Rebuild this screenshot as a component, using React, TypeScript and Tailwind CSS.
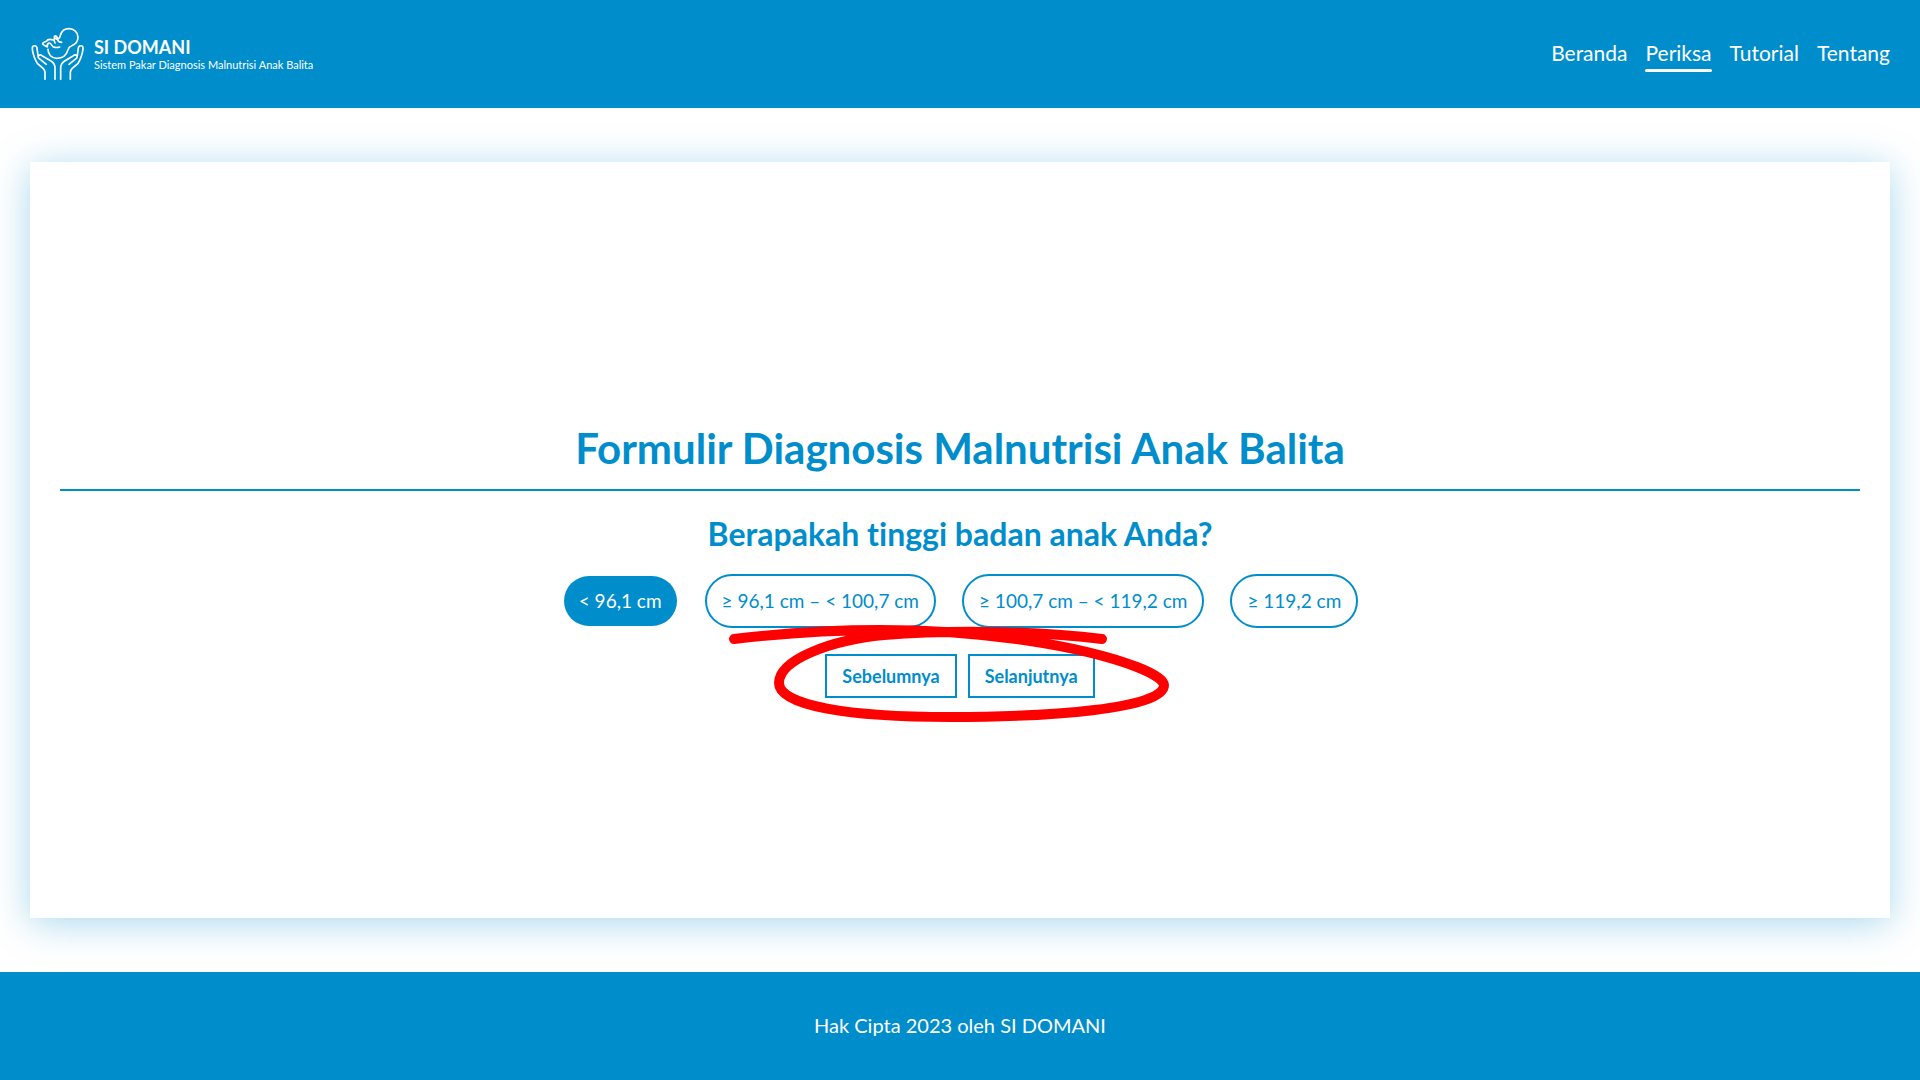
import { useState } from 'react';

const navLinks = ['Beranda', 'Periksa', 'Tutorial', 'Tentang'];
const heights = ['< 96,1 cm', '≥ 96,1 cm – < 100,7 cm', '≥ 100,7 cm – < 119,2 cm', '≥ 119,2 cm'];

function Logo() {
  return (
    <svg
      aria-hidden="true"
      className="h-[54px] w-[54px] shrink-0"
      viewBox="30 33 162 162"
      fill="none"
      stroke="currentColor"
      strokeWidth="5"
      strokeLinecap="round"
      strokeLinejoin="round"
    >
      <path d="M122 55C126 44 135 38 147 38c15 0 27 11 27 25 0 14-9 23-20 27-6 2-8 5-10 11-4 16-17 26-34 26-15 0-26-12-26-27" />
      <path d="M122 55c-1 8-4 12-8 14M112 70c-6-1-9-3-9-9 4-3 8 0 9 5M104 61c-3 7-2 14 1 20M112 70c2 7 7 9 13 9" />
      <path d="M100 72c-9-3-17-3-21 4-6 2-11 5-11 8 3 4 8 6 14 9-1-6 1-11 6-12 5-1 7 9 11 11 7 3 14 3 20 1" />
      <path d="M75 190v-21c0-9-7-13-14-19-7-5-12-10-15-19-6-14-9-24-9-35 0-9 13-9 14 0l3 23" />
      <path d="M79 145 57 127c-7-7 2-13 9-8l27 16c8 5 12 12 12 21v34" />
      <path d="M151 190v-21c0-9 7-13 14-19 7-5 12-10 15-19 6-14 9-24 9-35 0-9-13-9-14 0l-3 23" />
      <path d="m147 145 22-18c7-7-2-13-9-8l-26 16c-8 5-12 12-12 21v34" />
    </svg>
  );
}

export default function App() {
  const [selected, setSelected] = useState(0);
  return (
    <div className="flex min-h-screen flex-col bg-white font-['Lato',sans-serif] text-[20px] text-[#008dcc] [font-variant-ligatures:none]">
      <header className="flex h-[108px] items-center justify-between bg-[#008dcc] px-[30px] text-white">
        <a href="#beranda" className="flex items-center gap-[10px]">
          <Logo />
          <span className="flex flex-col pt-px">
            <span className="text-[18px] leading-[20px] font-bold">SI DOMANI</span>
            <span className="text-[11px] leading-[15px]">Sistem Pakar Diagnosis Malnutrisi Anak Balita</span>
          </span>
        </a>
        <nav className="flex gap-[18px] text-[21px]">
          {navLinks.map((name) => (
            <a key={name} href={'#' + name.toLowerCase()} className="flex flex-col pt-1 leading-[26px]">
              {name}
              <span className={name === 'Periksa' ? 'mt-[3px] h-[3px] rounded-full bg-white' : 'mt-[3px] h-[3px]'} />
            </a>
          ))}
        </nav>
      </header>

      <main className="flex grow flex-col px-[30px] py-[54px]">
        <section className="flex grow flex-col justify-center bg-white px-[30px] pt-[41px] text-center shadow-[0_5px_36px_rgba(0,141,204,0.34)]">
          <h1 className="text-[42px] leading-[50px] font-bold">Formulir Diagnosis Malnutrisi Anak Balita</h1>
          <hr className="mt-4 border-t-2 border-[#008dcc]" />
          <form onSubmit={(e) => e.preventDefault()}>
            <fieldset>
              <legend className="mx-auto pt-6 text-[32px] leading-[38px] font-bold">
                Berapakah tinggi badan anak Anda?
              </legend>
              <div className="mt-[21px] flex flex-wrap justify-center gap-[26px] text-[19px]">
                {heights.map((label, i) => (
                  <label
                    key={label}
                    className="relative cursor-pointer rounded-full border-2 border-[#008dcc] px-[15px] leading-[50px] has-checked:border-transparent has-checked:bg-[#008dcc] has-checked:bg-clip-padding has-checked:text-white"
                  >
                    <input
                      type="radio"
                      name="tinggi"
                      className="sr-only"
                      checked={selected === i}
                      onChange={() => setSelected(i)}
                    />
                    {label}
                  </label>
                ))}
              </div>
            </fieldset>
            <div className="relative mx-auto mt-[26px] flex w-fit gap-[11px] text-[18px] font-bold">
              <button type="button" className="h-11 border-2 border-[#008dcc] px-[15px]">
                Sebelumnya
              </button>
              <button type="submit" className="h-11 border-2 border-[#008dcc] px-[15px]">
                Selanjutnya
              </button>
              <svg
                aria-hidden="true"
                className="pointer-events-none absolute top-1/2 left-1/2 h-[120px] w-[460px] -translate-1/2 overflow-visible"
                viewBox="730 616 460 120"
                fill="none"
                stroke="#ff0000"
                strokeWidth="10"
                strokeLinecap="round"
              >
                <path d="M734 639C785 633 835 630 880 630C985 630 1082 646 1137 667C1155 674 1164 681 1164 685C1164 709 1050 717 950 717C850 717 779 706 779 683C779 660 830 640 884 635C960 629 1045 632 1102 639" />
              </svg>
            </div>
          </form>
        </section>
      </main>

      <footer className="flex h-[108px] items-center justify-center bg-[#008dcc] text-white">
        <p className="pb-0.5">Hak Cipta 2023 oleh SI DOMANI</p>
      </footer>
    </div>
  );
}
